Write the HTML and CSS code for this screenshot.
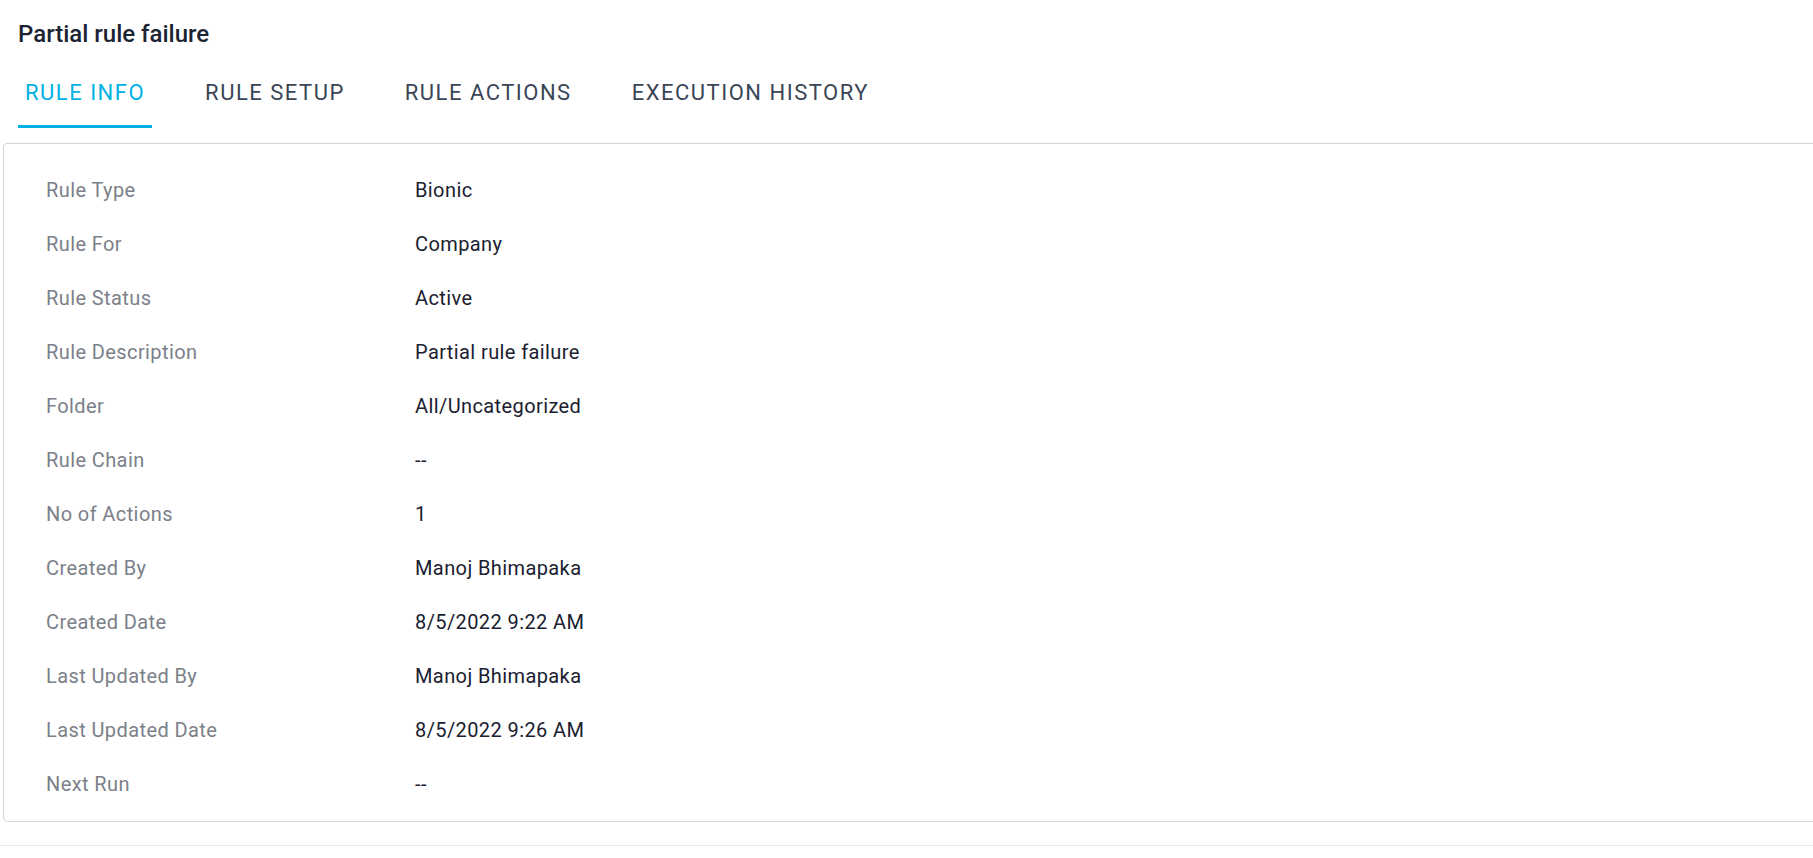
FILE: index.html
```html
<!DOCTYPE html>
<html>
<head>
<meta charset="utf-8">
<link rel="stylesheet" href="styles.css">
</head>
<body>
<div class="page">
  <h1 class="title">Partial rule failure</h1>
  <nav class="tabs">
    <div class="tab active">RULE INFO</div>
    <div class="tab">RULE SETUP</div>
    <div class="tab">RULE ACTIONS</div>
    <div class="tab">EXECUTION HISTORY</div>
  </nav>
  <section class="card">
    <div class="row"><div class="label">Rule Type</div><div class="value">Bionic</div></div>
    <div class="row"><div class="label">Rule For</div><div class="value">Company</div></div>
    <div class="row"><div class="label">Rule Status</div><div class="value">Active</div></div>
    <div class="row"><div class="label">Rule Description</div><div class="value">Partial rule failure</div></div>
    <div class="row"><div class="label">Folder</div><div class="value">All/Uncategorized</div></div>
    <div class="row"><div class="label">Rule Chain</div><div class="value">--</div></div>
    <div class="row"><div class="label">No of Actions</div><div class="value">1</div></div>
    <div class="row"><div class="label">Created By</div><div class="value">Manoj Bhimapaka</div></div>
    <div class="row"><div class="label">Created Date</div><div class="value">8/5/2022 9:22 AM</div></div>
    <div class="row"><div class="label">Last Updated By</div><div class="value">Manoj Bhimapaka</div></div>
    <div class="row"><div class="label">Last Updated Date</div><div class="value">8/5/2022 9:26 AM</div></div>
    <div class="row"><div class="label">Next Run</div><div class="value">--</div></div>
  </section>
  <div class="footer-line"></div>
</div>
</body>
</html>
```

FILE: styles.css
```css
html, body {
  margin: 0;
  padding: 0;
  background: #ffffff;
  overflow: hidden;
}

.page {
  font-family: Roboto, "Liberation Sans", sans-serif;
  width: 100%;
  overflow: hidden;
}

.title {
  margin: 0;
  padding: 20px 0 0 18px;
  height: 32px;
  font-size: 24px;
  line-height: 28px;
  font-weight: 500;
  color: #1c2433;
}

.tabs {
  display: flex;
  gap: 46px;
  padding: 0 0 0 18px;
  margin-top: 20px;
  height: 56px;
  margin-bottom: 15px;
}

.tab {
  padding: 3px 7px 0 7px;
  font-size: 22px;
  line-height: 36px;
  letter-spacing: 1.5px;
  color: #3a4556;
  box-sizing: border-box;
  height: 56px;
}

.tab.active {
  color: #00b2e2;
  border-bottom: 3px solid #00b2e2;
}

.card {
  margin-left: 3px;
  margin-right: -6px;
  border: 1px solid #d4d4d4;
  border-radius: 4px;
  padding: 19px 0 10px 42px;
}

.row {
  display: flex;
  height: 54px;
  align-items: center;
  font-size: 20px;
  letter-spacing: 0.4px;
}

.label {
  width: 369px;
  color: #7b8089;
}

.value {
  color: #1a2030;
}

.footer-line {
  margin-top: 23px;
  height: 1px;
  background: #e3e8ef;
}
```
